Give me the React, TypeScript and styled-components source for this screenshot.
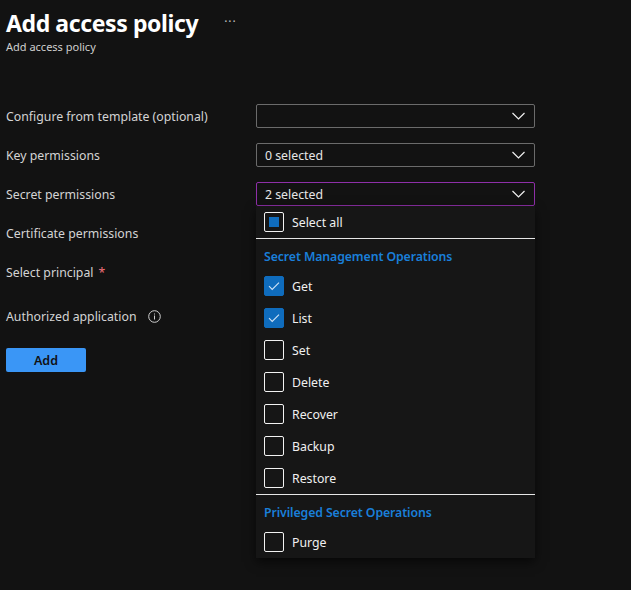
import React from "react";
import styled, { createGlobalStyle } from "styled-components";

const Global = createGlobalStyle`
  html, body { margin: 0; padding: 0; background: #121212; }
  body { font-family: "Noto Sans", "Open Sans", sans-serif; color: #d2d2d2; }
  #root { min-height: 590px; }
`;

const Page = styled.div`
  padding: 6px 0 0 6px;
  min-height: 584px;
  background: #121212;
`;

const Header = styled.header`
  display: flex;
  flex-direction: column;
`;

const TitleRow = styled.div`
  display: flex;
  align-items: center;
  gap: 26px;
`;

const Title = styled.h1`
  margin: 0;
  font-size: 23px;
  line-height: 34px;
  font-weight: 700;
  color: #ffffff;
  letter-spacing: -0.4px;
`;

const More = styled.span`
  color: #bdbdbd;
  font-size: 12px;
  letter-spacing: 1px;
  margin-top: -4px;
`;

const Subtitle = styled.div`
  font-size: 11px;
  line-height: 14px;
  color: #cfcfcf;
`;

const Form = styled.div`
  margin-top: 50px;
  display: flex;
  flex-direction: column;
  gap: 15px;
`;

const Row = styled.div<{ $extraTop?: number }>`
  display: grid;
  grid-template-columns: 250px 279px;
  align-items: center;
  height: 24px;
  margin-top: ${(p) => p.$extraTop ?? 0}px;
`;

const Label = styled.div`
  font-size: 12.3px;
  color: #d4d4d4;
  display: flex;
  align-items: center;
  gap: 4px;
`;

const Required = styled.span`
  color: #f1707b;
  margin-left: 1px;
`;

const InfoIcon = styled.svg`
  margin-left: 8px;
`;

const FieldWrap = styled.div`
  position: relative;
  height: 24px;
`;

const Select = styled.div<{ $focused?: boolean }>`
  box-sizing: border-box;
  height: 24px;
  border: 1px solid ${(p) => (p.$focused ? "#8e2fa8" : "#6b6b6b")};
  border-radius: 2px;
  display: flex;
  align-items: center;
  justify-content: space-between;
  padding: 0 9px 0 8px;
  font-size: 12.3px;
  color: #e6e6e6;
`;

const Panel = styled.div`
  position: absolute;
  top: 100%;
  left: 0;
  width: 279px;
  background: #161616;
  box-shadow: 0 4px 10px rgba(0, 0, 0, 0.6);
  z-index: 5;
`;

const Item = styled.div`
  height: 32px;
  display: flex;
  align-items: center;
  gap: 8px;
  padding-left: 8px;
  font-size: 12.3px;
  color: #f0f0f0;
`;

const Divider = styled.div`
  height: 1px;
  background: #e6e6e6;
`;

const Section = styled.div`
  box-sizing: border-box;
  height: 31px;
  padding-top: 3px;
  display: flex;
  align-items: center;
  padding-left: 8px;
  font-size: 12.3px;
  font-weight: 600;
  letter-spacing: -0.1px;
  color: #1a7fd9;
`;

const Box = styled.span<{ $checked?: boolean }>`
  box-sizing: border-box;
  width: 20px;
  height: 20px;
  border-radius: 2px;
  border: 1px solid ${(p) => (p.$checked ? "#0f6cbd" : "#f2f2f2")};
  background: ${(p) => (p.$checked ? "#0f6cbd" : "transparent")};
  display: flex;
  align-items: center;
  justify-content: center;
  flex: none;
`;

const Indeterminate = styled.span`
  width: 10px;
  height: 10px;
  background: #0f6cbd;
`;

const Button = styled.button`
  margin-top: 5px;
  width: 80px;
  height: 24px;
  border: none;
  border-radius: 2px;
  background: #3a96f6;
  color: #111;
  font-family: "Noto Sans", "Open Sans", sans-serif;
  font-size: 12.5px;
  font-weight: 600;
  padding: 0;
  align-self: flex-start;
`;

const Chevron = () => (
  <svg width="13" height="8" viewBox="0 0 13 8">
    <path d="M0.5 1 L6.5 7 L12.5 1" fill="none" stroke="#f0f0f0" strokeWidth="1.2" />
  </svg>
);

const Check = () => (
  <svg width="12" height="10" viewBox="0 0 12 10">
    <path d="M1 5.2 L4.2 8.4 L11 1.6" fill="none" stroke="#cfe3f7" strokeWidth="1.1" />
  </svg>
);

const CheckItem = ({ label, checked }: { label: string; checked?: boolean }) => (
  <Item>
    <Box $checked={checked}>{checked && <Check />}</Box>
    {label}
  </Item>
);

export default function App() {
  return (
    <>
      <Global />
      <Page>
        <Header>
          <TitleRow>
            <Title>Add access policy</Title>
            <More>···</More>
          </TitleRow>
          <Subtitle>Add access policy</Subtitle>
        </Header>
        <Form>
          <Row>
            <Label>Configure from template (optional)</Label>
            <Select>
              <span />
              <Chevron />
            </Select>
          </Row>
          <Row>
            <Label>Key permissions</Label>
            <Select>
              <span>0 selected</span>
              <Chevron />
            </Select>
          </Row>
          <Row>
            <Label>Secret permissions</Label>
            <FieldWrap>
              <Select $focused>
                <span>2 selected</span>
                <Chevron />
              </Select>
              <Panel>
                <Item>
                  <Box>
                    <Indeterminate />
                  </Box>
                  Select all
                </Item>
                <Divider />
                <Section>Secret Management Operations</Section>
                <CheckItem label="Get" checked />
                <CheckItem label="List" checked />
                <CheckItem label="Set" />
                <CheckItem label="Delete" />
                <CheckItem label="Recover" />
                <CheckItem label="Backup" />
                <CheckItem label="Restore" />
                <Divider />
                <Section>Privileged Secret Operations</Section>
                <CheckItem label="Purge" />
              </Panel>
            </FieldWrap>
          </Row>
          <Row>
            <Label>Certificate permissions</Label>
          </Row>
          <Row>
            <Label>
              Select principal <Required>*</Required>
            </Label>
          </Row>
          <Row $extraTop={5}>
            <Label>
              Authorized application
              <InfoIcon width="13" height="13" viewBox="0 0 13 13">
                <circle cx="6.5" cy="6.5" r="5.8" fill="none" stroke="#d0d0d0" strokeWidth="1" />
                <rect x="6" y="5.5" width="1" height="4" fill="#d0d0d0" />
                <rect x="6" y="3.5" width="1" height="1" fill="#d0d0d0" />
              </InfoIcon>
            </Label>
          </Row>
          <Button>Add</Button>
        </Form>
      </Page>
    </>
  );
}
